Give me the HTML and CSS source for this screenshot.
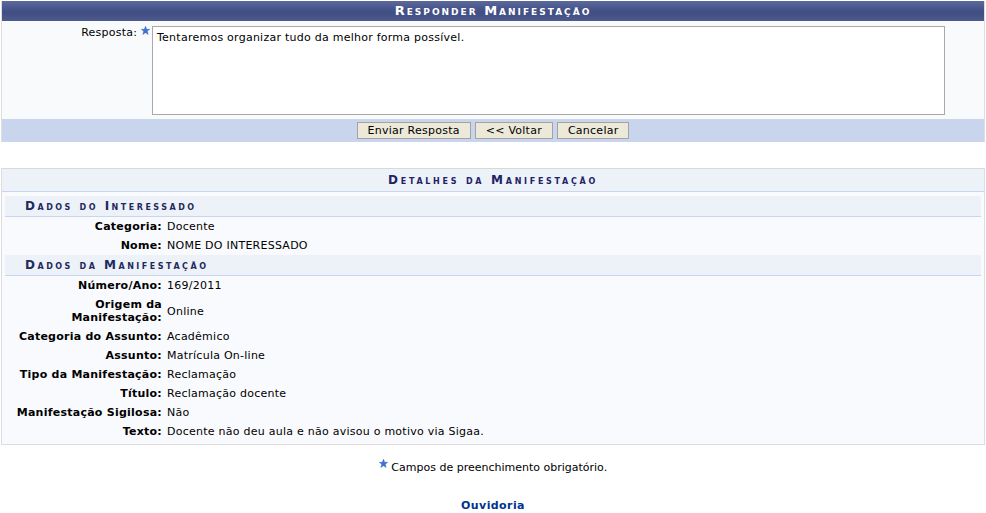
FILE: index.html
```html
<!DOCTYPE html>
<html>
  <head>
    <meta charset="utf-8">
    <link rel="stylesheet" href="styles.css">
  </head>
  <body>
    <div class="page">
      <form class="formulario">
        <div class="caption">Responder Manifestação</div>
        <div class="form-body">
          <div class="form-row">
            <label class="form-label" for="resposta">
              Resposta:
              <svg class="star" viewBox="0 0 10 10"><polygon points="5,0.3 6.3,3.6 9.7,3.7 7,5.9 8,9.5 5,7.4 2,9.5 3,5.9 0.3,3.7 3.7,3.6"/></svg>
            </label>
            <textarea id="resposta">Tentaremos organizar tudo da melhor forma possível.</textarea>
          </div>
        </div>
        <div class="form-foot">
          <button type="button" class="btn">Enviar Resposta</button>
          <button type="button" class="btn">&lt;&lt; Voltar</button>
          <button type="button" class="btn">Cancelar</button>
        </div>
      </form>

      <div class="visualizacao">
        <div class="vis-caption">Detalhes da Manifestação</div>

        <div class="subsection primeira">Dados do Interessado</div>
        <div class="dados">
          <div class="dado-label">Categoria:</div><div class="dado-valor">Docente</div>
          <div class="dado-label">Nome:</div><div class="dado-valor">NOME DO INTERESSADO</div>
        </div>

        <div class="subsection">Dados da Manifestação</div>
        <div class="dados">
          <div class="dado-label">Número/Ano:</div><div class="dado-valor">169/2011</div>
          <div class="dado-label">Origem da<br>Manifestação:</div><div class="dado-valor">Online</div>
          <div class="dado-label">Categoria do Assunto:</div><div class="dado-valor">Acadêmico</div>
          <div class="dado-label">Assunto:</div><div class="dado-valor">Matrícula On-line</div>
          <div class="dado-label">Tipo da Manifestação:</div><div class="dado-valor">Reclamação</div>
          <div class="dado-label">Título:</div><div class="dado-valor">Reclamação docente</div>
          <div class="dado-label">Manifestação Sigilosa:</div><div class="dado-valor">Não</div>
          <div class="dado-label">Texto:</div><div class="dado-valor">Docente não deu aula e não avisou o motivo via Sigaa.</div>
        </div>
      </div>

      <p class="obrigatorio">
        <svg class="star" viewBox="0 0 10 10"><polygon points="5,0.3 6.3,3.6 9.7,3.7 7,5.9 8,9.5 5,7.4 2,9.5 3,5.9 0.3,3.7 3.7,3.6"/></svg>
        Campos de preenchimento obrigatório.
      </p>

      <div class="voltar">
        <a href="#">Ouvidoria</a>
      </div>
    </div>
  </body>
</html>
```

FILE: styles.css
```css
* {
  font-family: "DejaVu Sans", Verdana, sans-serif;
  font-size: 11px;
  letter-spacing: 0.25px;
  margin: 0;
  padding: 0;
  box-sizing: border-box;
}

body {
  background: white;
  color: #000;
}

.page {
  padding: 1px 1px 0 1px;
}

/* formulario de resposta */
.formulario {
  border-left: solid 1px #dddddd;
  border-right: solid 1px #dddddd;
  background: #f9fafc;
}

.caption {
  height: 20px;
  line-height: 20px;
  text-align: center;
  color: white;
  font-weight: bold;
  font-variant: small-caps;
  font-size: 13px;
  letter-spacing: 2px;
  background: linear-gradient(#5b699b 0%, #44528a 45%, #404e82 60%, #4d5b8d 100%);
}

.form-body {
  padding: 5px 0 4px 0;
}

.form-row {
  display: flex;
  align-items: flex-start;
}

.form-label {
  width: 148px;
  text-align: right;
  padding-top: 0;
  line-height: 13px;
}

.star {
  width: 9px;
  height: 9px;
  fill: #3d73d6;
  stroke: #2a58b5;
  stroke-width: 0.4;
  vertical-align: 1px;
}

textarea {
  margin-left: 2px;
  width: 793px;
  height: 89px;
  border: solid 1px #a9a9a9;
  background: white;
  padding: 4px 4px;
  line-height: 13px;
  resize: none;
  color: #000;
}

.form-foot {
  background: #c8d5ec;
  height: 23px;
  display: flex;
  justify-content: center;
  align-items: center;
  gap: 4px;
}

.btn {
  height: 17px;
  padding: 0 10px;
  background: #ece9d8;
  border: solid 1px #a3a3a3;
  color: #000;
  line-height: 15px;
}

/* detalhes */
.visualizacao {
  margin-top: 26px;
  border: solid 1px #dddddd;
  border-top: solid 1px #d9d9d9;
  background: #f9fafd;
  padding-bottom: 3px;
}

.vis-caption {
  height: 23px;
  line-height: 22px;
  text-align: center;
  color: #222266;
  font-weight: bold;
  font-variant: small-caps;
  font-size: 12px;
  letter-spacing: 2.7px;
  background: #edf1f8;
  border-bottom: solid 1px #c8d5ec;
}

.subsection {
  margin: 0 3px;
  height: 21px;
  line-height: 21px;
  padding-left: 20px;
  color: #1f2a5e;
  font-weight: bold;
  font-variant: small-caps;
  font-size: 12px;
  letter-spacing: 2.5px;
  background: #edf1f8;
  border-bottom: solid 1px #c8d5ec;
}

.subsection.primeira {
  margin-top: 4px;
}

.dados {
  display: grid;
  grid-template-columns: 160px 1fr;
  align-items: center;
}

.dado-label {
  text-align: right;
  font-weight: bold;
  white-space: nowrap;
  line-height: 13px;
  padding: 3px 0;
}

.dado-valor {
  padding: 3px 0 3px 5px;
  line-height: 13px;
}

.obrigatorio {
  margin-top: 14px;
  text-align: center;
  line-height: 13px;
  letter-spacing: 0;
}

.obrigatorio .star {
  vertical-align: 3px;
}

.voltar {
  margin-top: 25px;
  text-align: center;
}

.voltar a {
  color: #003390;
  font-weight: bold;
  font-size: 11px;
  text-decoration: none;
  letter-spacing: 0.4px;
}
```
